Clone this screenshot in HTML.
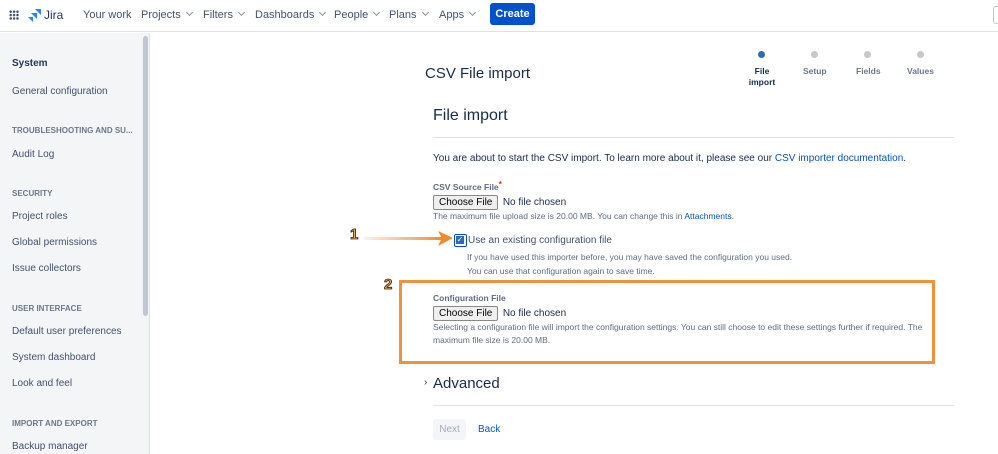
<!DOCTYPE html>
<html><head><style>
*{box-sizing:border-box;margin:0;padding:0}
body{width:998px;height:454px;overflow:hidden;background:#fff;font-family:"Liberation Sans",sans-serif;color:#172b4d;position:relative}
.a{position:absolute;white-space:nowrap}
.nav{font-size:11px;color:#42526e}
.nav i{display:inline-block;width:5px;height:5px;border-right:1px solid #8993a4;border-bottom:1px solid #8993a4;transform:rotate(45deg);margin-left:6px;position:relative;top:-3px}
.side{font-size:10px;color:#42526e}
.hdr{font-size:8px;font-weight:bold;color:#6b778c}
.fb{display:inline-block;border:1px solid #888;background:#efefef;border-radius:2px;font-size:10px;padding:1px 5px;color:#000}
.sm{font-size:8.5px;color:#5e6c84}
.num{font-size:15px;font-weight:900;color:#f7a84a;-webkit-text-stroke:0.8px #222}
</style></head><body>
<div class="a" style="left:0;top:0;width:998px;height:32px;border-bottom:1px solid #dfe1e6"></div>
<div class="a" style="left:9px;top:10px;width:10px;height:10px;background:radial-gradient(circle,#42526e 1.2px,transparent 1.4px) 0 0/3.4px 3.4px"></div>
<svg class="a" style="left:28px;top:8px" width="14" height="14" viewBox="0 0 14 14"><path d="M13 1H7l6 6z M9 5H3l6 6z M5 9H0l5 5z" fill="#2684ff"/></svg>
<div class="a" style="left:44px;top:8px;font-size:12px;color:#253858">Jira</div>
<div class="a nav" style="left:83px;top:9px">Your work</div>
<div class="a nav" style="left:141px;top:9px">Projects<i></i></div>
<div class="a nav" style="left:203px;top:9px">Filters<i></i></div>
<div class="a nav" style="left:255px;top:9px">Dashboards<i></i></div>
<div class="a nav" style="left:334px;top:9px">People<i></i></div>
<div class="a nav" style="left:389px;top:9px">Plans<i></i></div>
<div class="a nav" style="left:439px;top:9px">Apps<i></i></div>
<div class="a" style="left:490px;top:3px;width:45px;height:22px;background:#0052cc;border-radius:3px;color:#fff;font-size:11px;font-weight:bold;text-align:center;line-height:22px">Create</div>
<div class="a" style="left:0;top:33px;width:150px;height:421px;background:#f4f5f7;border-right:1px solid #dfe1e6"></div>
<div class="a" style="left:143px;top:36px;width:5px;height:280px;background:#c1c7d0;border-radius:3px"></div>
<div class="a" style="left:12px;top:58px;font-size:10px;font-weight:bold;color:#253858">System</div>
<div class="a side" style="left:12px;top:86px">General configuration</div>
<div class="a hdr" style="left:12px;top:126px">TROUBLESHOOTING AND SU...</div>
<div class="a side" style="left:12px;top:149px">Audit Log</div>
<div class="a hdr" style="left:12px;top:189px">SECURITY</div>
<div class="a side" style="left:12px;top:211px">Project roles</div>
<div class="a side" style="left:12px;top:237px">Global permissions</div>
<div class="a side" style="left:12px;top:263px">Issue collectors</div>
<div class="a hdr" style="left:12px;top:304px">USER INTERFACE</div>
<div class="a side" style="left:12px;top:326px">Default user preferences</div>
<div class="a side" style="left:12px;top:352px">System dashboard</div>
<div class="a side" style="left:12px;top:378px">Look and feel</div>
<div class="a hdr" style="left:12px;top:419px">IMPORT AND EXPORT</div>
<div class="a side" style="left:12px;top:441px">Backup manager</div>
<div class="a" style="left:425px;top:65px;font-size:15px">CSV File import</div>
<div class="a" style="left:758px;top:51px;width:7px;height:7px;border-radius:50%;background:#2d6bb5"></div>
<div class="a" style="left:811px;top:51px;width:7px;height:7px;border-radius:50%;background:#c8c8c8"></div>
<div class="a" style="left:864px;top:51px;width:7px;height:7px;border-radius:50%;background:#c8c8c8"></div>
<div class="a" style="left:917px;top:51px;width:7px;height:7px;border-radius:50%;background:#c8c8c8"></div>
<div class="a" style="left:748px;top:66px;font-size:8.5px;font-weight:bold;text-align:center;width:28px;line-height:11px">File<br>import</div>
<div class="a" style="left:803px;top:66px;font-size:8.5px;font-weight:bold;color:#6b778c">Setup</div>
<div class="a" style="left:856px;top:66px;font-size:8.5px;font-weight:bold;color:#6b778c">Fields</div>
<div class="a" style="left:907px;top:66px;font-size:8.5px;font-weight:bold;color:#6b778c">Values</div>
<div class="a" style="left:433px;top:107px;font-size:16px">File import</div>
<div class="a" style="left:433px;top:137px;width:521px;border-top:1px solid #dfe1e6"></div>
<div class="a" style="left:433px;top:153px;font-size:10px">You are about to start the CSV import. To learn more about it, please see our <span style="color:#0052cc">CSV importer documentation</span>.</div>
<div class="a" style="left:433px;top:182px;font-size:8.5px;font-weight:bold;color:#5e6c84">CSV Source File<span style="color:#de350b;position:relative;top:-3px">*</span></div>
<div class="a" style="left:433px;top:192px"><span class="fb">Choose File</span> <span style="font-size:10px">No file chosen</span></div>
<div class="a sm" style="left:433px;top:211px">The maximum file upload size is 20.00 MB. You can change this in <span style="color:#0052cc">Attachments</span>.</div>
<div class="a num" style="left:350px;top:226px">1</div>
<div class="a" style="left:364px;top:237px;width:80px;height:3px;background:linear-gradient(90deg,rgba(240,140,50,0.1),#f08a30)"></div>
<svg class="a" style="left:438px;top:230px" width="16" height="17"><path d="M0 1L15 8L0 16L4 8Z" fill="#f08a30"/></svg>
<div class="a" style="left:454px;top:234px;width:13px;height:13px;border:1.5px solid #0052cc;border-radius:2px;background:#fff"><div style="margin:1px;width:8px;height:8px;background:#2d6bb5;color:#fff;font-size:8px;line-height:8px;text-align:center">✓</div></div>
<div class="a" style="left:468px;top:235px;font-size:10px;color:#42526e">Use an existing configuration file</div>
<div class="a sm" style="left:467px;top:252px">If you have used this importer before, you may have saved the configuration you used.</div>
<div class="a sm" style="left:467px;top:266px">You can use that configuration again to save time.</div>
<div class="a num" style="left:384px;top:276px">2</div>
<div class="a" style="left:399px;top:280px;width:536px;height:84px;border:3px solid #f0923a"></div>
<div class="a" style="left:433px;top:293px;font-size:8.5px;font-weight:bold;color:#5e6c84">Configuration File</div>
<div class="a" style="left:433px;top:303px"><span class="fb">Choose File</span> <span style="font-size:10px">No file chosen</span></div>
<div class="a sm" style="left:433px;top:322px">Selecting a configuration file will import the configuration settings. You can still choose to edit these settings further if required. The</div>
<div class="a sm" style="left:433px;top:335px">maximum file size is 20.00 MB.</div>
<div class="a" style="left:424px;top:377px;font-size:10px">›</div>
<div class="a" style="left:433px;top:375px;font-size:15px">Advanced</div>
<div class="a" style="left:433px;top:405px;width:521px;border-top:1px solid #dfe1e6"></div>
<div class="a" style="left:433px;top:419px;width:33px;height:21px;background:#f4f5f7;border-radius:3px;color:#a5adba;font-size:10px;text-align:center;line-height:21px">Next</div>
<div class="a" style="left:478px;top:424px;font-size:10px;color:#0052cc">Back</div>
<div class="a" style="left:993px;top:6px;width:10px;height:18px;border:1px solid #c1c7d0;border-radius:3px"></div>
</body></html>
